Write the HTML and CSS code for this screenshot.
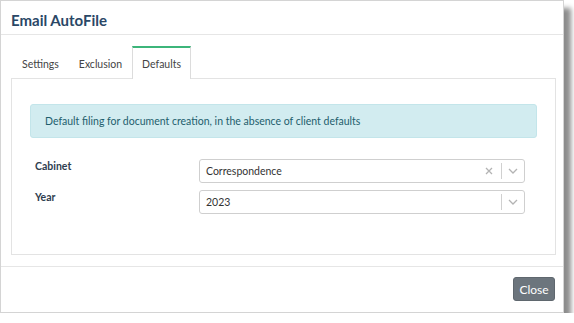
FILE: index.html
```html
<!DOCTYPE html>
<html>
<head>
<meta charset="utf-8">
<link rel="stylesheet" href="styles.css">
</head>
<body>
<div class="dialog">
  <div class="dlg-header">Email AutoFile</div>
  <div class="dlg-body">
    <div class="tabs">
      <div class="tab">Settings</div>
      <div class="tab">Exclusion</div>
      <div class="tab active">Defaults</div>
    </div>
    <div class="panel">
      <div class="alert">Default filing for document creation, in the absence of client defaults</div>
      <div class="form">
        <label class="lbl">Cabinet</label>
        <div class="select">
          <span class="val">Correspondence</span>
          <span class="clear">
            <svg width="10" height="10" viewBox="0 0 10 10"><path d="M2 2 L8 8 M8 2 L2 8" stroke="#b3b3b3" stroke-width="1.3" fill="none"/></svg>
          </span>
          <span class="sep"></span>
          <span class="arrow">
            <svg width="12" height="8" viewBox="0 0 12 8"><path d="M2 2 L6 6 L10 2" stroke="#b3b3b3" stroke-width="1.3" fill="none"/></svg>
          </span>
        </div>
        <label class="lbl">Year</label>
        <div class="select">
          <span class="val">2023</span>
          <span class="sep"></span>
          <span class="arrow">
            <svg width="12" height="8" viewBox="0 0 12 8"><path d="M2 2 L6 6 L10 2" stroke="#b3b3b3" stroke-width="1.3" fill="none"/></svg>
          </span>
        </div>
      </div>
    </div>
  </div>
  <div class="dlg-footer">
    <button class="btn">Close</button>
  </div>
</div>
</body>
</html>
```

FILE: styles.css
```css
html, body {
  margin: 0;
  padding: 0;
  background: #ffffff;
}
body {
  font-family: Lato, "Open Sans", sans-serif;
  font-size: 10.5px;
  color: #333;
}
.dialog {
  width: 562px;
  height: 311px;
  border: 1px solid #d4d4d4;
  background: #fff;
  box-shadow: 7px 8px 5px rgba(0, 0, 0, 0.45);
  display: flex;
  flex-direction: column;
}
.dlg-header {
  height: 34px;
  box-sizing: border-box;
  border-bottom: 1px solid #e6e6e6;
  padding: 10px 10px 0;
  font-size: 15px;
  font-weight: 700;
  color: #2a4766;
}
.dlg-body {
  padding: 11px 7px 0 10px;
}
.tabs {
  display: flex;
  height: 32px;
  box-sizing: border-box;
  padding-left: 1px;
}
.tab {
  padding: 2px 9px 0;
  display: flex;
  align-items: center;
  color: #444;
  border: 1px solid transparent;
  border-bottom: none;
}
.tab.active {
  padding-top: 1px;
  border-color: #dcdcdc;
  border-top: 2px solid #3cb57a;
  background: #fff;
  margin-bottom: -1px;
  position: relative;
  z-index: 1;
}
.panel {
  border: 1px solid #e3e3e3;
  height: 177px;
  box-sizing: border-box;
  padding: 25px 18px 0 18px;
}
.alert {
  background: #d2ecf0;
  border: 1px solid #c3e5ea;
  border-radius: 3px;
  color: #1e5e6d;
  height: 34px;
  box-sizing: border-box;
  padding: 0 14px;
  display: flex;
  align-items: center;
}
.form {
  display: grid;
  grid-template-columns: 164px 326px;
  row-gap: 7px;
  margin-top: 21px;
  padding-left: 5px;
}
.lbl {
  font-weight: 700;
  color: #2f3e4f;
  padding-top: 1px;
}
.select {
  height: 24px;
  box-sizing: border-box;
  border: 1px solid #cfcfcf;
  border-radius: 3px;
  display: flex;
  align-items: center;
  padding-left: 6px;
}
.val {
  flex: 1;
  color: #333;
}
.clear {
  display: flex;
  margin-right: 7px;
}
.sep {
  width: 1px;
  height: 16px;
  background: #d0d0d0;
}
.arrow {
  display: flex;
  width: 22px;
  justify-content: center;
}
.dlg-footer {
  margin-top: 11px;
  border-top: 1px solid #e6e6e6;
  flex: 1;
  display: flex;
  justify-content: flex-end;
  align-items: flex-start;
  padding: 10px 8px 0 0;
}
.btn {
  background: #6c757d;
  color: #fff;
  border: 1px solid #5f676e;
  border-radius: 3px;
  font-family: inherit;
  font-size: 12px;
  width: 42px;
  height: 24px;
  padding: 0;
}
```
